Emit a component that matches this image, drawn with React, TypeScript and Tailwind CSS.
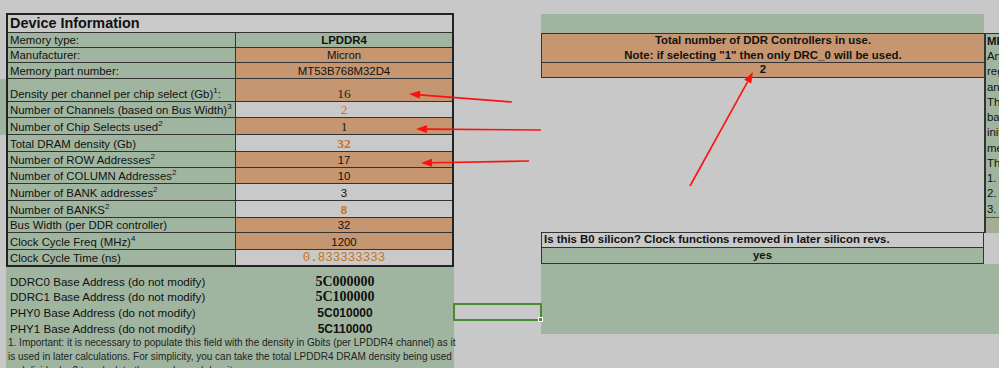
import React from "react";

type Row = {
  label: string;
  sup?: string;
  suffix?: string;
  value: string;
  bg: "green" | "orange" | "gray";
  kind: "bold" | "sans" | "serif" | "serifOrange" | "serifOrangeBold" | "sansOrangeBold" | "monoOrange";
  h: string;
};

const rows: Row[] = [
  { label: "Memory type:", value: "LPDDR4", bg: "green", kind: "bold", h: "h-[15px]" },
  { label: "Manufacturer:", value: "Micron", bg: "orange", kind: "sans", h: "h-[15px]" },
  { label: "Memory part number:", value: "MT53B768M32D4", bg: "orange", kind: "sans", h: "h-[16px]" },
  { label: "Density per channel per chip select (Gb)", sup: "1", suffix: ":", value: "16", bg: "orange", kind: "serif", h: "h-[23px]" },
  { label: "Number of Channels (based on Bus Width)", sup: "3", value: "2", bg: "gray", kind: "serifOrange", h: "h-[16px]" },
  { label: "Number of Chip Selects used", sup: "2", value: "1", bg: "orange", kind: "serif", h: "h-[17px]" },
  { label: "Total DRAM density (Gb)", value: "32", bg: "gray", kind: "serifOrangeBold", h: "h-[17px]" },
  { label: "Number of ROW Addresses", sup: "2", value: "17", bg: "orange", kind: "sans", h: "h-[16px]" },
  { label: "Number of COLUMN Addresses", sup: "2", value: "10", bg: "orange", kind: "sans", h: "h-[16px]" },
  { label: "Number of BANK addresses", sup: "2", value: "3", bg: "gray", kind: "sans", h: "h-[17px]" },
  { label: "Number of BANKS", sup: "2", value: "8", bg: "gray", kind: "sansOrangeBold", h: "h-[17px]" },
  { label: "Bus Width (per DDR controller)", value: "32", bg: "orange", kind: "sans", h: "h-[15px]" },
  { label: "Clock Cycle Freq (MHz)", sup: "4", value: "1200", bg: "orange", kind: "sans", h: "h-[17px]" },
  { label: "Clock Cycle Time (ns)", value: "0.833333333", bg: "gray", kind: "monoOrange", h: "h-[15px]" },
];

const bgClass = {
  green: "bg-[#a0b5a0]",
  orange: "bg-[#c59670]",
  gray: "bg-[#c9c9c9]",
};

const kindClass = {
  bold: "font-bold text-[#111]",
  sans: "text-[#111]",
  serif: "font-['Liberation_Serif',serif] text-[13.5px] text-[#222]",
  serifOrange: "font-['Liberation_Serif',serif] text-[13.5px] text-[#c8731e]",
  serifOrangeBold: "font-['Liberation_Serif',serif] font-bold text-[13.5px] text-[#c8731e]",
  sansOrangeBold: "font-bold text-[#c8731e]",
  monoOrange: "font-['Liberation_Mono',monospace] text-[12.5px] text-[#c8731e]",
};

const farRows = ["MR", "An", "reg", "and", "The", "bas", "init", "mem", "The", "1.", "2.", "3."];

const addresses = [
  { label: "DDRC0 Base Address (do not modify)", value: "5C000000", serif: true, h: "h-[15px]" },
  { label: "DDRC1 Base Address (do not modify)", value: "5C100000", serif: true, h: "h-[15px]" },
  { label: "PHY0 Base Address (do not modify)", value: "5C010000", serif: false, h: "h-[17px]" },
  { label: "PHY1 Base Address (do not modify)", value: "5C110000", serif: false, h: "h-[15px]" },
];

function Arrow({ x1, y1, x2, y2 }: { x1: number; y1: number; x2: number; y2: number }) {
  // tail (x1,y1) -> tip (x2,y2)
  const dx = x2 - x1;
  const dy = y2 - y1;
  const len = Math.hypot(dx, dy);
  const ux = dx / len;
  const uy = dy / len;
  const bx = x2 - ux * 11;
  const by = y2 - uy * 11;
  const px = -uy * 4;
  const py = ux * 4;
  return (
    <g>
      <line x1={x1} y1={y1} x2={bx} y2={by} stroke="#ff1010" strokeWidth={1.6} />
      <polygon points={`${x2},${y2} ${bx + px},${by + py} ${bx - px},${by - py}`} fill="#ff1010" />
    </g>
  );
}

export default function App() {
  return (
    <div className="relative w-[999px] h-[368px] overflow-hidden bg-[#c8c8c8] font-['Liberation_Sans',Arial,sans-serif] text-[11.4px] text-[#111]">
      <div className="flex pt-[13px]">
        {/* left margin strip */}
        <div className="w-[6px] flex flex-col">
          <div className="h-[66px]" />
          <div className="h-[56px] bg-[#a0b5a0]" />
        </div>

        {/* device information */}
        <div className="w-[448px] flex flex-col">
          <div className="border-2 border-[#222]">
            <div className="h-[18px] border-b border-[#333] bg-[#c9c9c9] flex items-center pl-[2px]">
              <span className="text-[14.4px] font-bold leading-none">Device Information</span>
            </div>
            {rows.map((r, i) => (
              <div
                key={r.label}
                className={`flex ${r.h} ${i < rows.length - 1 ? "border-b border-[#333]" : ""}`}
              >
                <div className="w-[228px] shrink-0 border-r border-[#333] bg-[#a0b5a0] flex items-end pl-[2px] pb-[1px] leading-none whitespace-nowrap">
                  <span>
                    {r.label}
                    {r.sup && <sup className="text-[8px] relative -top-[5px]">{r.sup}</sup>}
                    {r.suffix}
                  </span>
                </div>
                <div className={`flex-1 flex items-end justify-center pb-[1px] leading-none ${bgClass[r.bg]}`}>
                  <span className={kindClass[r.kind]}>{r.value}</span>
                </div>
              </div>
            ))}
          </div>

          {/* base addresses + footnote */}
          <div className="h-[110px] bg-[#a0b5a0] flex flex-col pt-[7px]">
            {addresses.map((a) => (
              <div key={a.label} className={`flex items-center ${a.h} text-[11.6px]`}>
                <div className="w-[230px] pl-[4px] whitespace-nowrap">{a.label}</div>
                <div
                  className={`flex-1 text-center font-bold ${
                    a.serif ? "font-['Liberation_Serif',serif] text-[14px]" : "text-[12px]"
                  }`}
                >
                  {a.value}
                </div>
              </div>
            ))}
            <div className="pl-[2px] text-[10px] leading-[14px] whitespace-nowrap text-[#222]">
              <div>1. Important: it is necessary to populate this field with the density in Gbits (per LPDDR4 channel) as it</div>
              <div>is used in later calculations. For simplicity, you can take the total LPDDR4 DRAM density being used</div>
              <div>and divide&nbsp; by 2 to calculate the per channel density.</div>
            </div>
          </div>
        </div>

        {/* middle column with selected cell */}
        <div className="w-[87px] flex flex-col">
          <div className="h-[290px]" />
          <div className="relative h-[18px] border-2 border-[#4b8b30] -mx-[1px]">
            <div className="absolute -bottom-[3px] -right-[3px] w-[5px] h-[5px] bg-[#4b8b30] border border-white" />
          </div>
        </div>

        {/* right block */}
        <div className="w-[458px] flex flex-col">
          <div className="flex">
            <div className="w-[443px] flex flex-col">
              <div className="mt-[1px] h-[19px] bg-[#a0b5a0]" />
              <div className="border-y border-l border-[#333] bg-[#c59670] font-bold">
                <div className="h-[29px] border-b border-[#333] flex flex-col items-center justify-center leading-[15px]">
                  <div>Total number of DDR Controllers in use.</div>
                  <div>Note: if selecting "1" then only DRC_0 will be used.</div>
                </div>
                <div className="h-[14px] flex items-center justify-center leading-none">2</div>
              </div>
              <div className="h-[154px]" />
              <div className="border border-[#333] font-bold">
                <div className="h-[15px] border-b border-[#333] bg-[#c9c9c9] flex items-center pl-[2px] leading-none">
                  Is this B0 silicon? Clock functions removed in later silicon revs.
                </div>
                <div className="h-[15px] bg-[#a0b5a0] flex items-center justify-center leading-none">yes</div>
              </div>
            </div>
            <div className="w-[15px] flex flex-col">
              <div className="h-[20px]" />
              <div className="border-t border-l-2 border-[#333] bg-[#a0b5a0] overflow-hidden">
                {farRows.map((t, i) => (
                  <div
                    key={i}
                    className={`h-[15.25px] pl-[1px] flex items-center leading-none whitespace-nowrap ${i === 0 ? "font-bold" : ""}`}
                  >
                    {t}
                  </div>
                ))}
                <div className="h-[16px] border-t border-[#555] bg-[#a4ae96]" />
              </div>
            </div>
          </div>
          <div className="h-[70px] bg-[#a0b5a0]" />
        </div>
      </div>

      {/* annotation arrows */}
      <svg className="absolute inset-0 pointer-events-none" width="999" height="368">
        <Arrow x1={512} y1={102} x2={409} y2={94} />
        <Arrow x1={541} y1={130} x2={416} y2={129} />
        <Arrow x1={529} y1={161} x2={421} y2={163} />
        <Arrow x1={690} y1={186} x2={753} y2={72} />
      </svg>
    </div>
  );
}
